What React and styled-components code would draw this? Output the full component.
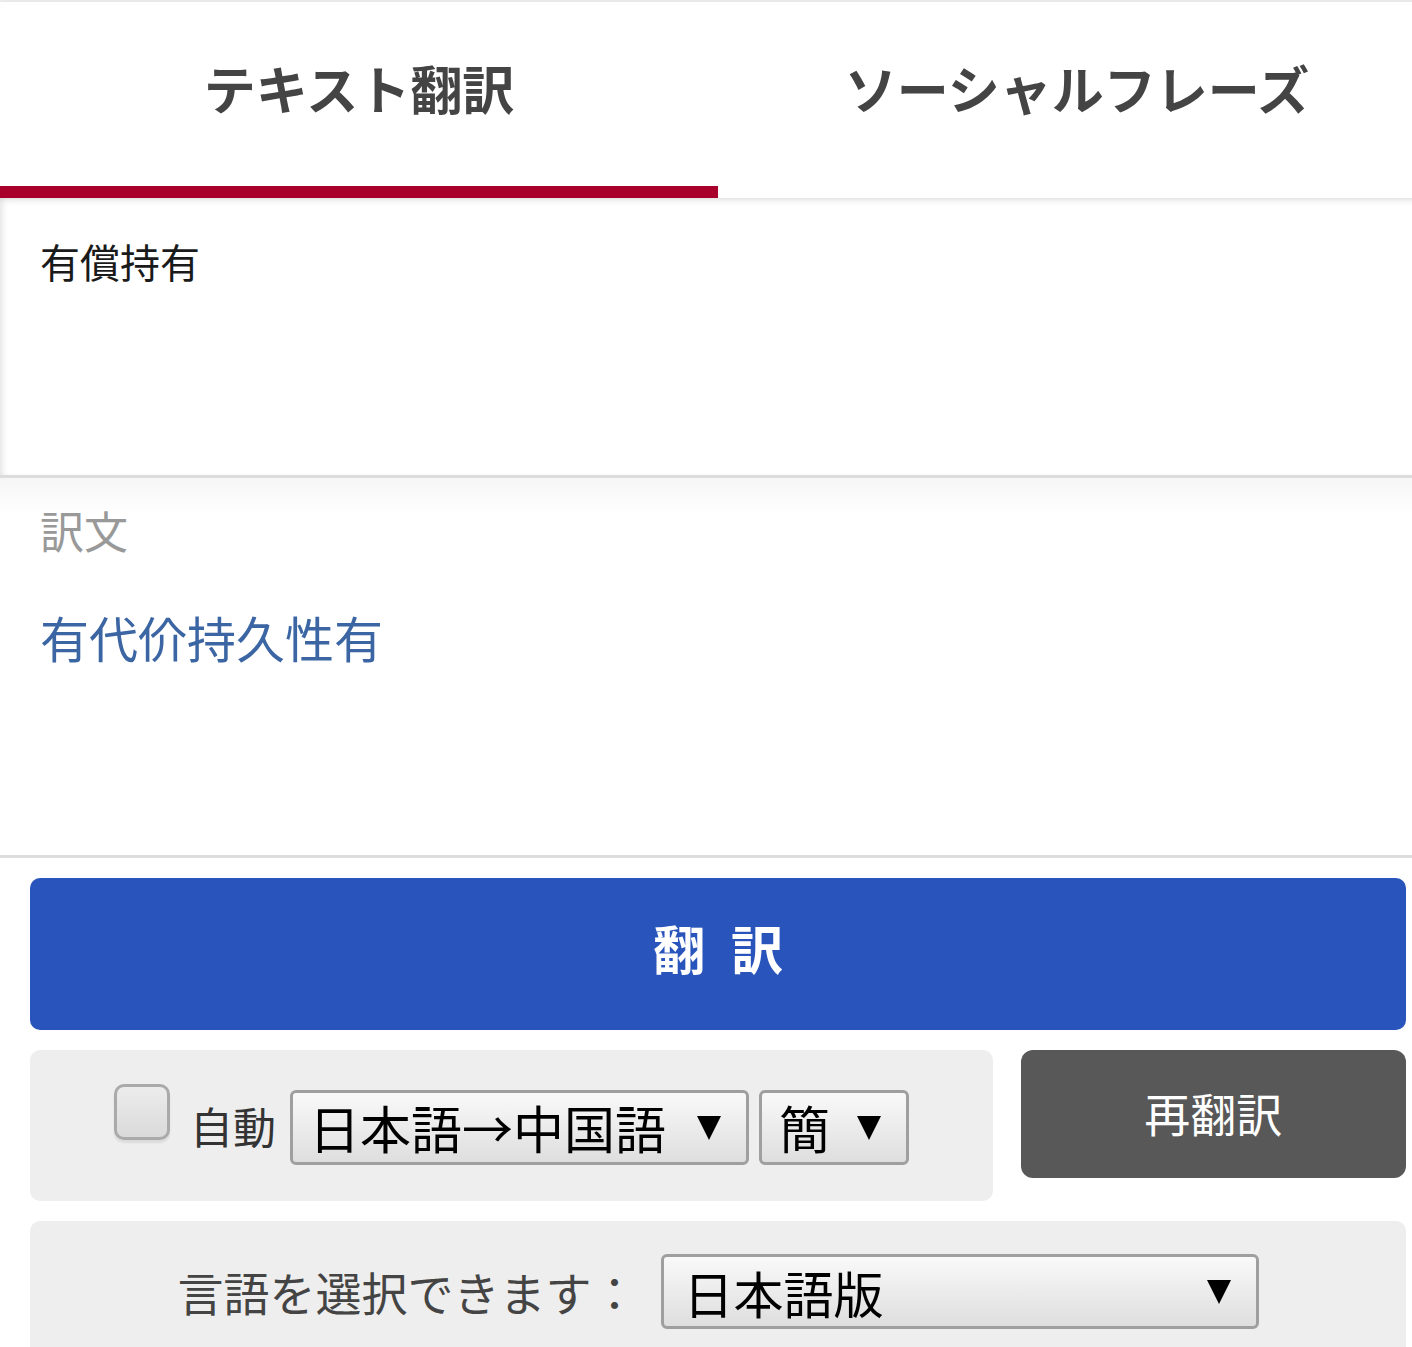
import React from "react";
import styled, { createGlobalStyle } from "styled-components";

const Global = createGlobalStyle`
  html, body { margin: 0; padding: 0; background: #fff; overflow-x: hidden; }
  body { font-family: "Noto Sans CJK JP", "Noto Sans", sans-serif; }
  * { box-sizing: border-box; }
`;

const Page = styled.div`
  width: 1436px;
  border-top: 2px solid #eeeeee;
`;

const Tabs = styled.div`
  display: flex;
  background: #fff;
  position: relative;
  z-index: 1;
  box-shadow: 0 2px 6px rgba(0, 0, 0, 0.12);
`;

const Tab = styled.div`
  flex: 1;
  height: 196px;
  padding-top: 50px;
  text-align: center;
  font-size: 52px;
  font-weight: 700;
  line-height: 1.4;
  color: #444;
  border-bottom: 12px solid ${(p) => (p.$active ? "#a8002a" : "transparent")};
`;

const InputArea = styled.div`
  height: 280px;
  padding: 35px 40px 0;
  font-size: 40px;
  line-height: 1.4;
  color: #1a1a1a;
  background: #fff;
  border-bottom: 3px solid #dcdcdc;
  box-shadow: inset 5px 0 6px -3px rgba(0, 0, 0, 0.12);
`;

const OutputArea = styled.div`
  height: 380px;
  padding: 22px 40px 0;
  background: linear-gradient(#f6f6f6, #fff 36px);
  border-bottom: 3px solid #dddddd;
`;

const OutputLabel = styled.div`
  font-size: 44px;
  line-height: 1.4;
  color: #999;
`;

const OutputText = styled.div`
  margin-top: 41px;
  font-size: 49px;
  line-height: 1.4;
  color: #3b66a3;
`;

const Controls = styled.div`
  padding: 20px 30px 0;
  display: flex;
  flex-direction: column;
  gap: 20px;
`;

const TranslateButton = styled.button`
  height: 152px;
  border: none;
  border-radius: 10px;
  background: #2954bb;
  color: #fff;
  font-family: inherit;
  font-size: 52px;
  font-weight: 700;
  word-spacing: 14px;
  padding: 0 0 14px;
  display: flex;
  align-items: center;
  justify-content: center;
`;

const Row = styled.div`
  display: flex;
  justify-content: space-between;
  align-items: flex-start;
`;

const OptionsPanel = styled.div`
  width: 70%;
  height: 151px;
  background: #eeeeee;
  border-radius: 10px;
  display: flex;
  align-items: center;
  justify-content: center;
`;

const Checkbox = styled.span`
  width: 56px;
  height: 56px;
  margin-bottom: 27px;
  border: 3px solid #aaaaaa;
  border-radius: 10px;
  background: linear-gradient(#ececec, #dadada);
  box-shadow: 0 3px 2px rgba(0, 0, 0, 0.08);
`;

const AutoLabel = styled.span`
  margin-left: 20px;
  margin-right: 14px;
  font-size: 43px;
  line-height: 1.4;
  color: #333;
`;

const Select = styled.div`
  width: ${(p) => p.$w}px;
  height: 75px;
  margin-top: ${(p) => p.$mt || 0}px;
  margin-left: ${(p) => p.$ml || 0}px;
  padding: 0 25px 0 ${(p) => p.$pl || 20}px;
  border: 3px solid #9f9f9f;
  border-radius: 6px;
  background: linear-gradient(#f9f9f9, #dedede);
  display: flex;
  align-items: center;
  justify-content: space-between;
  font-size: ${(p) => p.$fs || 51}px;
  line-height: 1.2;
  color: #000;
`;

const Arrow = styled.span`
  width: 0;
  height: 0;
  border-left: 12px solid transparent;
  border-right: 12px solid transparent;
  border-top: 24px solid #000;
  flex: none;
`;

const RetranslateButton = styled.button`
  width: 28%;
  height: 128px;
  border: none;
  border-radius: 12px;
  background: #585858;
  color: #fff;
  font-family: inherit;
  font-size: 46px;
  padding: 0 0 4px;
  display: flex;
  align-items: center;
  justify-content: center;
`;

const LangPanel = styled.div`
  height: 160px;
  padding-top: 33px;
  background: #eeeeee;
  border-radius: 10px 10px 0 0;
  display: flex;
  align-items: flex-start;
  justify-content: center;
`;

const LangLabel = styled.span`
  margin-right: 23px;
  font-size: 46px;
  line-height: 75px;
  color: #444;
`;

export default function App() {
  return (
    <Page>
      <Global />
      <Tabs>
        <Tab $active>テキスト翻訳</Tab>
        <Tab>ソーシャルフレーズ</Tab>
      </Tabs>
      <InputArea>有償持有</InputArea>
      <OutputArea>
        <OutputLabel>訳文</OutputLabel>
        <OutputText>有代价持久性有</OutputText>
      </OutputArea>
      <Controls>
        <TranslateButton>翻 訳</TranslateButton>
        <Row>
          <OptionsPanel>
            <Checkbox role="checkbox" aria-checked="false" />
            <AutoLabel>自動</AutoLabel>
            <Select $w={459} $mt={4} $pl={16}>
              <span>日本語→中国語</span>
              <Arrow />
            </Select>
            <Select $w={150} $mt={4} $ml={10} $pl={17}>
              <span>簡</span>
              <Arrow />
            </Select>
          </OptionsPanel>
          <RetranslateButton>再翻訳</RetranslateButton>
        </Row>
        <LangPanel>
          <LangLabel>言語を選択できます：</LangLabel>
          <Select $w={598} $fs={50}>
            <span>日本語版</span>
            <Arrow />
          </Select>
        </LangPanel>
      </Controls>
    </Page>
  );
}
